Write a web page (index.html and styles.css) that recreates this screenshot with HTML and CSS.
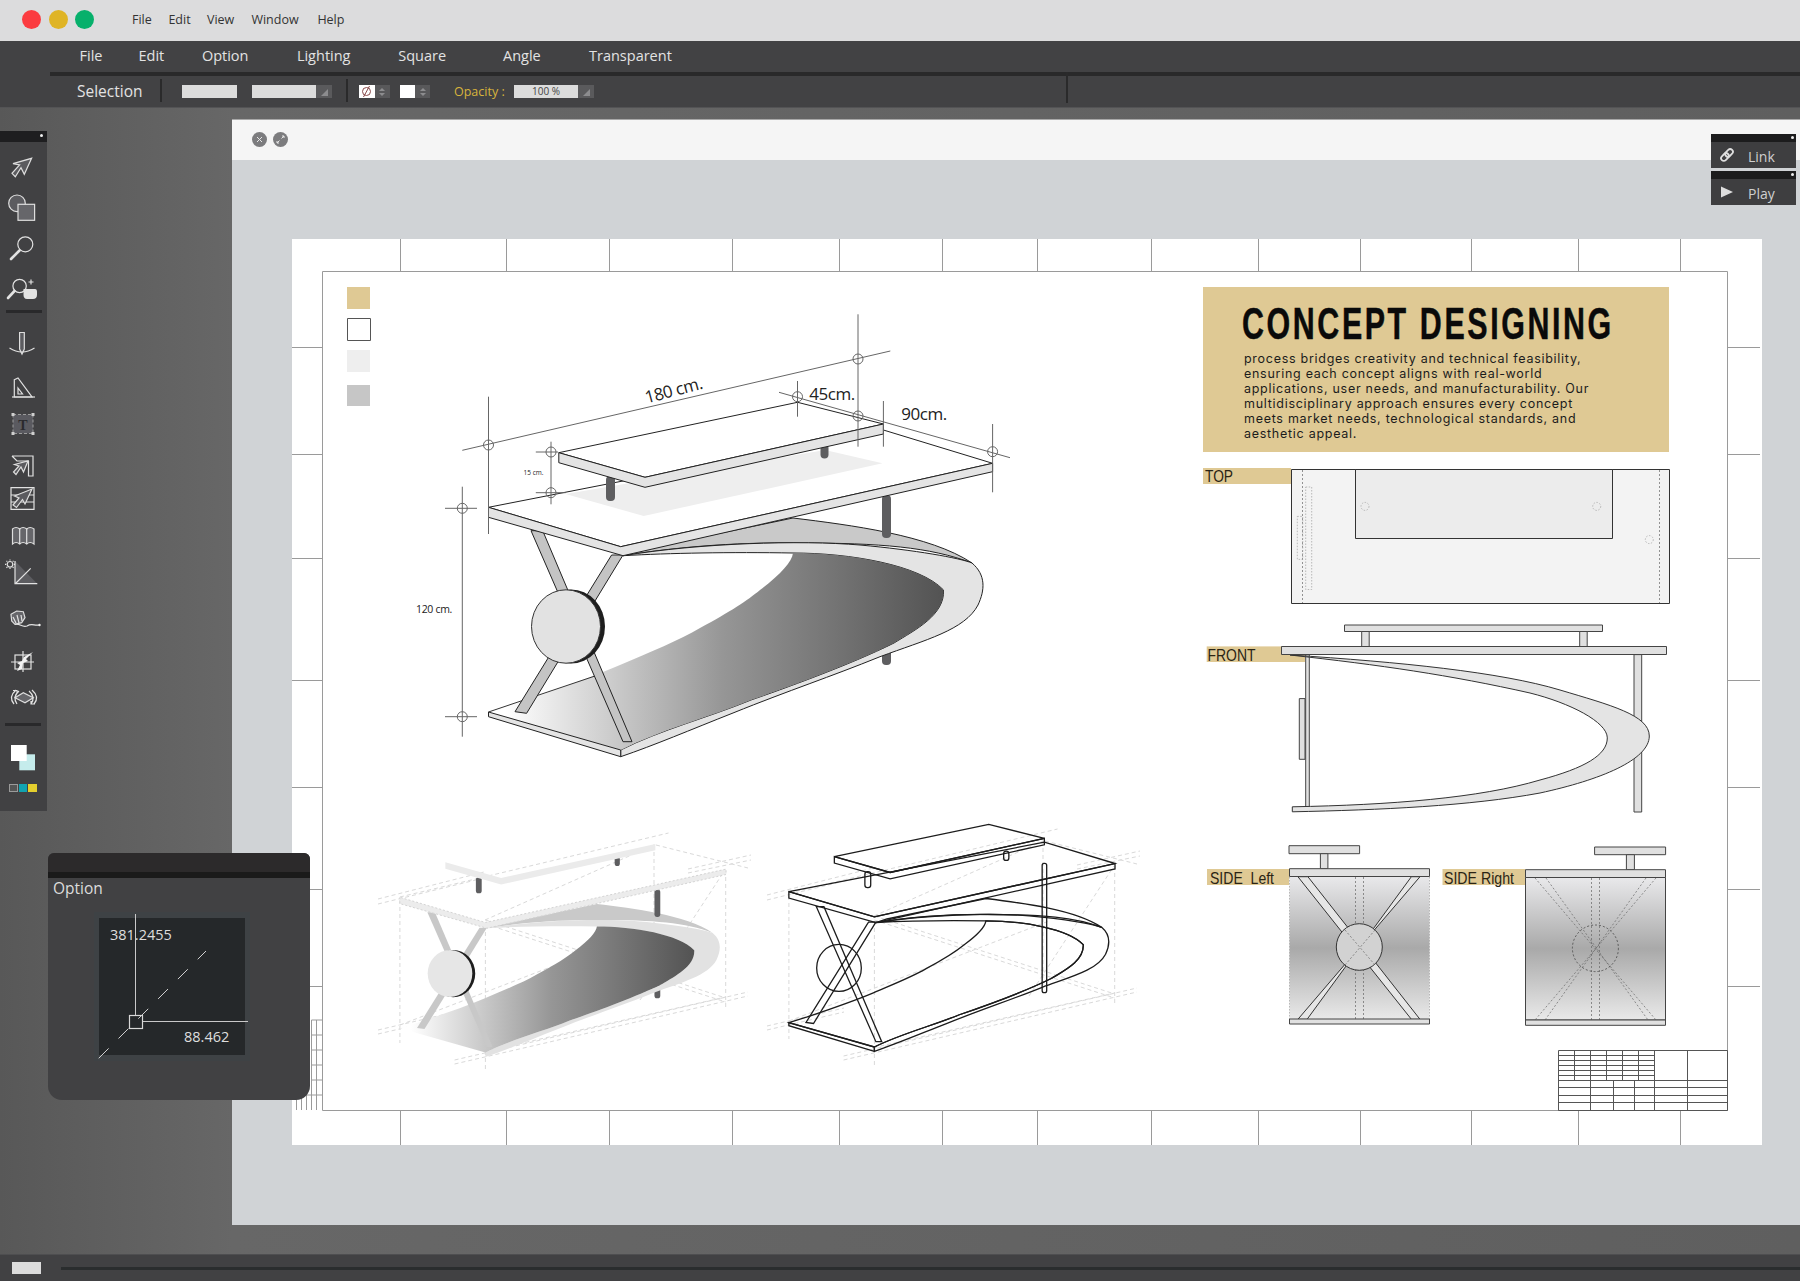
FILE: index.html
```html
<!DOCTYPE html>
<html lang="en">
<head>
<meta charset="utf-8">
<title>Concept Designing</title>
<link rel="stylesheet" href="styles.css">
</head>
<body>
<header class="titlebar">
  <div class="lights"><span class="light red"></span><span class="light amber"></span><span class="light green"></span></div>
  <nav class="sysmenu"><span class="s1">File</span><span class="s-2">Edit</span><span class="s-3">View</span><span class="s-4">Window</span><span>Help</span></nav>
</header>
<nav class="appmenu">
  <span class="m1">File</span><span class="m2">Edit</span><span class="m3">Option</span><span class="m4">Lighting</span><span class="m5">Square</span><span class="m6">Angle</span><span class="m7">Transparent</span>
</nav>
<div class="options">
  <span class="sel-label">Selection</span>
  <span class="vsep"></span>
  <span class="field f-a"></span>
  <span class="field f-b"></span><span class="drop"></span>
  <span class="vsep s2"></span>
  <span class="swatch sw-none"><svg width="15" height="13" viewBox="0 0 15 13"><circle cx="7.5" cy="6.5" r="4" class="none-mark"/><path d="M4.5 12L10.5 1" class="none-mark"/></svg></span><span class="spin"><i></i><b></b></span>
  <span class="swatch sw-white"></span><span class="spin"><i></i><b></b></span>
  <span class="opacity">Opacity :</span>
  <span class="field f-c">100 %</span><span class="drop"></span>
  <span class="vsep s3"></span>
</div>

<main class="workspace">
  <section class="doc">
    <div class="doc-head">
      <span class="doc-btn">
        <svg width="15" height="15" viewBox="0 0 15 15"><path d="M5 5l5 5M10 5l-5 5" class="doc-glyph"/></svg>
      </span>
      <span class="doc-btn">
        <svg width="15" height="15" viewBox="0 0 15 15"><path d="M8.5 6.5L11 4M6.5 8.5L4 11M9 4h2v2M4 9v2h2" class="doc-glyph"/></svg>
      </span>
    </div>
    <div class="doc-body">
      <div class="paper">
        <svg class="sheet" width="1470" height="906" viewBox="292 239 1470 906">
          <defs>
            <linearGradient id="shade" gradientUnits="userSpaceOnUse" x1="505" y1="0" x2="940" y2="0">
              <stop offset="0" stop-color="#ffffff"/><stop offset=".5" stop-color="#969696"/><stop offset="1" stop-color="#545454"/>
            </linearGradient>
            <linearGradient id="sideshade" x1="0" y1="0" x2="0" y2="1">
              <stop offset="0" stop-color="#e9e9eb"/><stop offset=".5" stop-color="#a9a9a9"/><stop offset="1" stop-color="#e9e9e9"/>
            </linearGradient>
            <path id="g-ridge" d="M640 550L793 518C850 525 930 535 972 563C930 547 880 543 800 543C730 542 670 548 623 555.7Z"/>
            <path id="g-band" d="M623 555.7C700 543 800 540 860 545C915 550 960 558 972 563C986 575 985 590 978 605C965 630 925 640 880 656.7C830 677 790 690 733 713C690 730 655 745 620.7 756.7V750C660 730 710 717 751 700C780 690 850 665 894 643C915 630 945 615 943.5 590C920 565 850 553 793 553C730 552 670 553 623 555.7Z"/>
            <path id="g-dark" d="M488.5 712L517 703C555 690 590 678 620 665C650 652 680 640 700 628C730 612 748 600 760 590C780 575 792 562 793 553C850 553 920 565 943.5 590C945 615 915 630 894 643C850 665 780 690 751 700C710 717 660 730 620.7 750Z"/>
            <path id="g-desk-top" d="M488.5 507.3L620.7 546.7L992.6 463.3L883.4 430Z"/>
            <path id="g-desk-edge" d="M488.5 507.3V517.3L623 555.7L992.6 471.7V463.3L620.7 546.7Z"/>
            <path id="g-shelf-top" d="M558.8 452.7L797.5 402.3L883.4 424L645 477.3Z"/>
            <path id="g-shelf-edge" d="M558.8 452.7V462.7L645 487.3L883.4 434V424L645 477.3Z"/>
            <path id="g-base" d="M488.5 712V716.7L620.7 756.7V750Z"/>
            <path id="g-leg-a" d="M531 530.7H542.7L632 741.7H623Z"/>
            <path id="g-leg-b" d="M611.6 555H623L526.6 713.3L515 711.7Z"/>
            <ellipse id="g-disc-back" cx="571" cy="626.5" rx="34" ry="37"/>
            <ellipse id="g-disc" cx="566" cy="626.5" rx="34.5" ry="36.7"/>
            <rect id="g-post-a" x="606" y="476" width="9" height="25" rx="4"/>
            <rect id="g-post-b" x="820.5" y="444" width="8" height="14.5" rx="4"/>
            <rect id="g-post-c" x="882" y="495" width="9" height="43" rx="4"/>
            <rect id="g-stub" x="882" y="640" width="9" height="25" rx="4"/>
            <rect id="g-post-long" x="880" y="463" width="7" height="202" rx="3"/>
            <g id="g-guides">
              <path d="M399.9 897L668.5 833M378 904L484 878M378 899L484 872M656 845L748 868M688 873L751 860M688 869L751 855M485.4 920L725.7 998M485.4 924L725.7 1002M454.6 1060L748 992M454.6 1064L748 996M378 1030L455 1012M378 1034L455 1016M484.4 1051.7L725.7 997M400 1025L660 925M485 920L654 845M640 1000L725 870"/>
              <path d="M399.9 900V1043M485.4 925V1070M725.7 870V1010M654 845V990"/>
            </g>
          </defs>

          <g class="frame">
            <rect x="322.5" y="271.5" width="1405" height="839"/>
            <path d="M400.5 239V271M506.5 239V271M609.5 239V271M732.5 239V271M839.5 239V271M942.5 239V271M1037.5 239V271M1151.5 239V271M1258.5 239V271M1360.5 239V271M1471.5 239V271M1578.5 239V271M1680.5 239V271"/>
            <path d="M400.5 1111V1145M506.5 1111V1145M609.5 1111V1145M732.5 1111V1145M839.5 1111V1145M942.5 1111V1145M1037.5 1111V1145M1151.5 1111V1145M1258.5 1111V1145M1360.5 1111V1145M1471.5 1111V1145M1578.5 1111V1145M1680.5 1111V1145"/>
            <path d="M292 347.5H322M292 454.5H322M292 558.5H322M292 680.5H322M292 787.5H322M292 889.5H322M292 986.5H322"/>
            <path d="M1728 347.5H1760M1728 454.5H1760M1728 558.5H1760M1728 680.5H1760M1728 787.5H1760M1728 889.5H1760M1728 986.5H1760"/>
            <path d="M311.5 1020H322M311.5 1035H322M311.5 1050H322M311.5 1065H322M311.5 1080H322M292 1095H322M311.5 1020V1110M316.5 1020V1110M296.5 1095V1110M301.5 1095V1110M306.5 1095V1110"/>
          </g>

          <rect class="sw-gold" x="347" y="287" width="23" height="22"/>
          <rect class="sw-open" x="347.5" y="318.5" width="23" height="22"/>
          <rect class="sw-light" x="347" y="350" width="23" height="22"/>
          <rect class="sw-grey" x="347" y="385" width="23" height="21"/>

          <!-- main isometric table -->
          <g class="shaded">
            <use href="#g-stub" class="post"/>
            <use href="#g-ridge" class="ridge"/>
            <use href="#g-band" class="band"/>
            <use href="#g-dark" class="dark"/>
            <path class="baseline" d="M488.5 712L595 676"/>
            <use href="#g-post-c" class="post"/>
            <use href="#g-base" class="band"/>
            <use href="#g-leg-a" class="leg"/>
            <use href="#g-leg-b" class="leg"/>
            <use href="#g-desk-top" class="whiteface"/>
            <use href="#g-desk-edge" class="band"/>
            <path class="shadow" d="M565.6 494L825 450L882.4 463.3L643.7 516Z"/>
            <use href="#g-post-a" class="post"/>
            <use href="#g-post-b" class="post"/>
            <use href="#g-shelf-top" class="whiteface"/>
            <use href="#g-shelf-edge" class="band"/>
            <use href="#g-disc-back" class="discback"/>
            <use href="#g-disc" class="disc"/>
          </g>

          <g class="dims">
            <path d="M462.3 450.3L890.3 351M488.5 396.7V534M858 314.3V446.7M779 392.3L1010 457.7M797.5 381V416.7M883.4 401V446.7M992.6 424V492.3M551 441.7V504.3M535.8 452H558M535.8 492.7H565.6M462.3 486.7V736.7M445 508.3H477M445 716.7H477"/>
            <circle cx="488.5" cy="445" r="5"/><circle cx="858" cy="359" r="5"/><circle cx="797.5" cy="396.7" r="5"/><circle cx="858" cy="416" r="5"/><circle cx="992.6" cy="451.7" r="5"/><circle cx="551" cy="452" r="5"/><circle cx="551" cy="492.7" r="5"/><circle cx="462.3" cy="508.3" r="5"/><circle cx="462.3" cy="716.7" r="5"/>
          </g>
          <text class="dim" x="675" y="396" transform="rotate(-15 675 396)">180 cm.</text>
          <text class="dim" x="832" y="400">45cm.</text>
          <text class="dim" x="924" y="420">90cm.</text>
          <text class="dim-s" x="434" y="613">120 cm.</text>
          <text class="dim-xs" x="533.5" y="475">15 cm.</text>

          <!-- construction lines + ghost render -->
          <use href="#g-guides" class="guides"/>
          <g class="ghost" transform="matrix(.647 0 0 .64 83.8 572.6)">
            <use href="#g-stub" class="post"/>
            <use href="#g-ridge" class="ridge"/>
            <use href="#g-band" class="g-band"/>
            <use href="#g-dark" class="dark"/>
            <use href="#g-post-c" class="post"/>
            <use href="#g-leg-a" class="g-leg"/>
            <use href="#g-leg-b" class="g-leg"/>
            <use href="#g-desk-edge" class="g-edge"/>
            <use href="#g-post-a" class="post"/>
            <use href="#g-post-b" class="post"/>
            <use href="#g-shelf-edge" class="g-shelf"/>
            <use href="#g-disc-back" class="discback"/>
            <use href="#g-disc" class="g-disc"/>
          </g>

          <!-- wireframe -->
          <use href="#g-guides" class="guides" transform="translate(389 -4)"/>
          <g class="wire" transform="matrix(.647 0 0 .64 472.8 567)">
            <use href="#g-ridge"/>
            <use href="#g-band"/>
            <use href="#g-dark"/>
            <use href="#g-post-long"/>
            <use href="#g-leg-a"/>
            <use href="#g-leg-b"/>
            <use href="#g-base"/>
            <use href="#g-desk-top"/>
            <use href="#g-desk-edge"/>
            <use href="#g-post-a"/>
            <use href="#g-post-b"/>
            <use href="#g-shelf-top"/>
            <use href="#g-shelf-edge"/>
            <use href="#g-disc"/>
          </g>

          <!-- TOP -->
          <rect class="tag" x="1203" y="468" width="88" height="16"/>
          <text class="tagtext" x="1205" y="482" textLength="28" lengthAdjust="spacingAndGlyphs">TOP</text>
          <rect class="top-desk" x="1291.5" y="469.5" width="378" height="134"/>
          <rect class="top-shelf" x="1355.5" y="469.5" width="257" height="69"/>
          <path class="dash" d="M1302.5 470V603M1659.5 470V603"/>
          <rect class="dot" x="1305.7" y="487" width="6" height="102.5"/>
          <rect class="dot" x="1297.3" y="516.4" width="5.4" height="43"/>
          <circle class="dot" cx="1365" cy="506.4" r="4"/><circle class="dot" cx="1596.7" cy="506.4" r="4"/><circle class="dot" cx="1649.3" cy="539.6" r="4"/>

          <!-- FRONT -->
          <rect class="tag" x="1206.7" y="646.4" width="98.3" height="15.6"/>
          <text class="tagtext" x="1207.5" y="660.5" textLength="48" lengthAdjust="spacingAndGlyphs">FRONT</text>
          <rect class="part" x="1344.5" y="625" width="258" height="6.5"/>
          <rect class="part" x="1361.7" y="631.5" width="7.5" height="15"/>
          <rect class="part" x="1579.7" y="631.5" width="7.5" height="15"/>
          <rect class="part" x="1305.7" y="654.6" width="3.6" height="152.4"/>
          <rect class="part" x="1634" y="654.6" width="7.7" height="157.4"/>
          <rect class="part" x="1299.3" y="698.6" width="5.7" height="60.7"/>
          <path class="sweep" d="M1290 655C1400 662 1500 672 1560 690C1610 705 1649.3 715 1649.3 736C1649.3 760 1600 780 1540 793C1470 806 1380 810 1292.3 811.8V806.8C1390 805 1480 798 1540 780C1585 768 1607.3 755 1607.3 737.9C1607.3 722 1570 703 1530 693C1450 675 1380 665 1290 655Z"/>
          <rect class="part" x="1281.5" y="646.5" width="385" height="8"/>

          <!-- SIDE Left -->
          <rect class="tag" x="1207" y="869" width="82" height="16"/>
          <text class="tagtext" x="1210" y="883.5" textLength="64" lengthAdjust="spacingAndGlyphs">SIDE  Left</text>
          <rect class="sideface" x="1289.5" y="876.5" width="140" height="143"/>
          <path class="dot" d="M1289.5 877V1019M1429.5 877V1019"/>
          <path class="dash" d="M1355.5 877V1019M1363.5 877V1019"/>
          <path class="limb" d="M1297.9 876.7H1307.9L1420 1019.3H1411.4Z"/>
          <path class="limb" d="M1420 876.7H1411.4L1307.1 1019.3H1297.9Z"/>
          <ellipse class="hub" cx="1359.3" cy="947" rx="23" ry="23.3"/>
          <path class="dash" d="M1345 930L1375 965M1375 930L1345 965"/>
          <rect class="part" x="1289" y="845.7" width="70.6" height="8"/>
          <rect class="part" x="1320.4" y="853.7" width="7.5" height="15"/>
          <rect class="part" x="1289.5" y="868.7" width="140" height="7.8"/>
          <rect class="part" x="1289.5" y="1019" width="140" height="5"/>

          <!-- SIDE Right -->
          <rect class="tag" x="1442.5" y="869" width="83" height="16"/>
          <text class="tagtext" x="1444" y="883.5" textLength="70" lengthAdjust="spacingAndGlyphs">SIDE Right</text>
          <rect class="sideface solid" x="1525.5" y="877.5" width="140" height="142.5"/>
          <path class="dash" d="M1591.5 878V1020M1599.5 878V1020M1535 878L1656 1020M1546 878L1648 1020M1656 878L1535 1020M1646 878L1545 1020"/>
          <ellipse class="dashring" cx="1595.4" cy="948.3" rx="23" ry="23.3"/>
          <rect class="part" x="1594.6" y="847" width="71" height="7.7"/>
          <rect class="part" x="1626.4" y="854.7" width="8" height="15"/>
          <rect class="part" x="1525.5" y="869.7" width="140" height="7.8"/>
          <rect class="part" x="1525.5" y="1020" width="140" height="5.3"/>

          <!-- title block -->
          <g class="tblock">
            <rect x="1558.5" y="1050.5" width="169" height="60"/>
            <path d="M1558.5 1055.5H1654M1558.5 1060.5H1654M1558.5 1065.5H1654M1558.5 1070.5H1654M1558.5 1075.5H1654M1558.5 1080.5H1727.5M1558.5 1087.5H1727.5M1558.5 1095.5H1727.5M1558.5 1102.5H1727.5"/>
            <path d="M1574.5 1050V1080M1590.5 1050V1110M1606.5 1050V1080M1622.5 1050V1080M1638.5 1050V1080M1613.5 1080V1110M1634.5 1080V1110M1654.5 1050V1110M1687.5 1050V1110"/>
          </g>
        </svg>
        <article class="brief">
          <h1>CONCEPT DESIGNING</h1>
          <p>process bridges creativity and technical feasibility,<br>ensuring each concept aligns with real-world<br>applications, user needs, and manufacturability. Our<br>multidisciplinary approach ensures every concept<br>meets market needs, technological standards, and<br>aesthetic appeal.</p>
        </article>
      </div>
    </div>
  </section>

  <aside class="palette">
    <div class="grip"></div>
    <div class="tools">
      <svg class="tool" viewBox="0 0 28 28"><path class="ic" d="M23.6 4.3L16.3 20.3L13 13.7L7.3 22.7L4 19.3L11.6 11L5 9.7Z"/></svg>
      <svg class="tool" viewBox="0 0 28 28"><circle class="ic" cx="9" cy="9.3" r="8.3"/><rect class="ic solid" x="10" y="10.3" width="16.6" height="16"/></svg>
      <svg class="tool" viewBox="0 0 28 28"><circle class="ic-w" cx="17.3" cy="10.3" r="7.5"/><path class="ic-h" d="M11.5 16.5L3 25"/></svg>
      <svg class="tool" viewBox="0 2 28 28"><circle class="ic-w" cx="11.6" cy="13" r="6.7"/><path class="ic-h" d="M6.5 18L0 25"/><path class="ic-w" d="M23 6.5V11.5M20.5 9H25.5"/><path class="ic-f" d="M15.5 16H27C28.5 16 29 17 29 19V22C29 24.5 27.5 26 25 26H19C16.5 26 15.5 24 15.5 22Z"/></svg>
      <span class="rule"></span>
      <svg class="tool" viewBox="0 0 28 28"><path class="ic" d="M11.6 2.5H16.3V19L14 24L11.6 19Z"/><path class="ic-w" d="M1.5 18Q14 26 26.5 18"/></svg>
      <svg class="tool" viewBox="0 0 28 28"><path class="ic-w" d="M6.3 7.7L10 6L24 25H6.3ZM10 16L14.5 22H10Z"/><path class="ic-w" d="M4 25H27"/></svg>
      <svg class="tool" viewBox="0 0 28 28"><rect class="tbox" x="5" y="4.5" width="20" height="19"/><path class="tcorner" d="M3.5 3H6.5V6H3.5ZM23.5 3H26.5V6H23.5ZM3.5 22H6.5V25H3.5ZM23.5 22H26.5V25H23.5Z"/><text class="tglyph" x="15" y="20">T</text></svg>
      <svg class="tool" viewBox="0 0 28 28"><path class="ic-w" d="M4 4H25V24H20.5V9M4 4L9 9H20.5"/><path class="ic" d="M20 9L15.5 20L13 15L8 22.5L5.5 20L11 14L6.5 12.5Z"/></svg>
      <svg class="tool" viewBox="0 0 28 28"><path class="ic-w" d="M3 3.7H26V25.3H3ZM3 11H26M3 18H26"/><path class="ic" d="M24 5L17 20L14.5 15.5L8.5 23.5L5 21L11 14L6.5 12Z"/></svg>
      <svg class="tool" viewBox="0 0 28 28"><path class="ic solid" d="M4.5 8Q8 5 11.7 8Q15 5 18.7 8Q22 5 26 8V23Q22 20 18.7 23Q15 20 11.7 23Q8 20 4.5 23Z"/><path class="ic-w" d="M11.7 8V23M18.7 8V23"/></svg>
      <svg class="tool" viewBox="0 0 28 28"><path class="tri" d="M7 2L29.3 24.7H7Z"/><path class="ic-w" d="M7 2V24.7H29.3M8 24L22.7 9.3"/><circle class="ic-w" cx="2" cy="5.3" r="2.8"/><path class="ic-w" d="M2 .5V1.6M2 9V10M-3 5.3H-1.8M5.8 5.3H7M-1.5 1.8L-.7 2.6M5.5 1.8L4.7 2.6M-1.5 8.8L-.7 8M5.5 8.8L4.7 8"/></svg>
      <svg class="tool" viewBox="0 0 28 28"><path class="ic solid" d="M3 9.3L8.7 6L15.3 6.7L17 12.7L13.7 17.7L7 19.3L3.7 16Z"/><path class="ic-w" d="M5 12L8 18M9 10L11 18M13 10L14 16M7 19.3C12 18 14 23 19 21C24 18 26 21 31 20"/><circle class="ic-d" cx="31.5" cy="20" r="1.2"/></svg>
      <svg class="tool" viewBox="0 0 28 28"><rect class="ic-w" x="7" y="8" width="16" height="14"/><path class="ic-w" d="M3 15H26M15 4V25"/><path class="ic-d" d="M25 5L18 12L20 14L15 16L14 22L9 24L12 18L9 16L14 14L16 10Z"/></svg>
      <svg class="tool" viewBox="0 0 28 28"><path class="ic solid" d="M7 13.7L15.3 8.7L25.3 13.7L17 18.7Z"/><path class="ic-w" d="M8 6Q0 13 6 20M11 7Q4 13 9 20M24 6Q32 13 26 20M21 7Q28 13 23 20M5 6.5H9V10M27 20H23V17"/></svg>
      <span class="rule r2"></span>
      <svg class="tool fill" viewBox="0 0 28 40"><rect class="fill-b" x="11.3" y="16.3" width="15.7" height="16"/><rect class="fill-a" x="3" y="7" width="15.7" height="16"/></svg>
      <div class="chips"><span class="chip c1"></span><span class="chip c2"></span><span class="chip c3"></span></div>
    </div>
  </aside>

  <aside class="option-panel">
    <div class="panel-top"></div>
    <div class="panel-strip"></div>
    <div class="panel-title">Option</div>
    <div class="coord-well">
      <div class="coord-box">
        <svg class="coord-lines" width="156" height="149" viewBox="94 912 156 149">
          <path class="coord-dash" d="M98.7 1058.3L206 951"/>
          <path class="coord-line" d="M135.5 914V1015M143 1021.5H248"/>
          <rect class="coord-handle" x="129.5" y="1015.5" width="13" height="13"/>
        </svg>
        <span class="coord-a">381.2455</span>
        <span class="coord-b">88.462</span>
      </div>
    </div>
  </aside>

  <aside class="mini-stack">
    <div class="mini">
      <div class="mini-grip"></div>
      <div class="mini-row">
        <svg class="mini-ic" width="16" height="16" viewBox="0 0 16 16"><g transform="rotate(-45 8 8)"><rect class="chain" x="0.8" y="5.3" width="8.6" height="5.4" rx="2.7"/><rect class="chain" x="6.6" y="5.3" width="8.6" height="5.4" rx="2.7"/></g></svg>
        <span>Link</span>
      </div>
    </div>
    <div class="mini">
      <div class="mini-grip"></div>
      <div class="mini-row">
        <svg class="mini-ic" width="16" height="16" viewBox="0 0 16 16"><path class="play" d="M2 2.5L14 8L2 13.5Z"/></svg>
        <span>Play</span>
      </div>
    </div>
  </aside>
</main>

<footer class="statusbar">
  <span class="st-box"></span>
  <span class="st-line"></span>
</footer>
</body>
</html>
```
FILE: styles.css
```css
* { box-sizing: border-box; }
html, body { margin: 0; height: 100%; }
body {
  width: 1800px; height: 1281px; overflow: hidden;
  display: flex; flex-direction: column;
  font-family: "Open Sans", "Noto Sans", sans-serif;
  background: #5f5f5f;
}

/* title bar */
.titlebar {
  height: 41px; flex: none; background: #dcdcdd;
  display: flex; align-items: center; padding-left: 22px;
}
.lights { display: flex; gap: 7.5px; }
.light { width: 19px; height: 19px; border-radius: 50%; margin-top: -3px; }
.red { background: #fb3b40; }
.amber { background: #dfb425; }
.green { background: #07b06b; }
.sysmenu { display: flex; margin-left: 38px; margin-top: -3px; font-size: 12.5px; color: #333; }
.s1 { width: 36.4px; }
.s-2 { width: 38.6px; }
.s-3 { width: 44.4px; }
.s-4 { width: 66px; }

/* menu bar */
.appmenu {
  height: 31px; flex: none; background: #424244; padding: 0 0 2px 79.5px;
  display: flex; align-items: center; color: #e3e3e3; font-size: 14.5px;
}
.appmenu span { flex: none; }
.m1 { width: 59px; }
.m2 { width: 63.4px; }
.m3 { width: 95px; }
.m4 { width: 101.3px; }
.m5 { width: 104.8px; }
.m6 { width: 86px; }

/* option bar */
.options {
  height: 35px; flex: none; margin-left: 0; background: #424244;
  display: flex; align-items: center; position: relative; padding-left: 77px;
  border-top: 0; color: #e3e3e3;
}
.options::before {
  content: ""; position: absolute; left: 50px; right: 0; top: 0; height: 4px; background: #29292a;
}
.sel-label { font-size: 15.5px; width: 83px; padding-top: 2px; }
.vsep { width: 2px; height: 23px; background: #2a2a2b; margin-top: 2px; }
.field {
  height: 13px; background: #dcdcdc; margin-top: 4px;
  color: #444; font-size: 10px; line-height: 13px; text-align: center;
}
.f-a { width: 55px; margin-left: 20px; }
.f-b { width: 64px; margin-left: 15px; }
.f-c { width: 64px; }
.drop {
  width: 16px; height: 13px; background: #5a5a5c; margin-top: 4px; position: relative;
}
.drop::after {
  content: ""; position: absolute; right: 4px; bottom: 2px;
  border-style: solid; border-width: 0 0 7px 7px; border-color: transparent transparent #8c8c8e transparent;
}
.s2 { margin-left: 14px; }
.swatch { width: 15.5px; height: 13px; background: #fff; margin-top: 4px; display: block; }
.sw-none { margin-left: 11px; }
.sw-none svg { display: block; }
.none-mark { fill: none; stroke: #8a4a4a; stroke-width: 1; }
.sw-white { margin-left: 10px; }
.spin {
  width: 15px; height: 13px; margin-top: 4px; background: #58585a;
  display: flex; flex-direction: column; align-items: center; justify-content: center; gap: 2px;
}
.spin i, .spin b { display: block; width: 0; height: 0; border-style: solid; border-color: transparent; }
.spin i { border-width: 0 3px 3px; border-bottom-color: #8d8d8f; }
.spin b { border-width: 3px 3px 0; border-top-color: #8d8d8f; }
.opacity { color: #d8b43c; font-size: 12.5px; margin-left: 24px; width: 60px; padding-top: 3px; }
.s3 { position: absolute; left: 1066px; height: 31px; top: 0; margin: 0; }

/* workspace */
.workspace {
  flex: 1; position: relative; display: flex; flex-direction: column; min-height: 0;
  background: linear-gradient(90deg, #585858 0, #676767 232px, #5f5f5f 100%);
  padding: 11px 0 29px 232px;
  border-top: 1px solid #535355;
}

/* document window */
.doc { flex: 1; display: flex; flex-direction: column; min-height: 0; background: #d0d3d6; }
.doc-head {
  height: 41px; flex: none; background: #f5f5f5; border-top: 1px solid #a8a8a8;
  display: flex; align-items: center; gap: 6.4px; padding: 0 0 2px 19.5px;
}
.doc-btn { width: 15px; height: 15px; border-radius: 50%; background: #7c7c7e; display: block; }
.doc-btn svg { display: block; }
.doc-glyph { fill: none; stroke: #e8e8e8; stroke-width: 1; }
.doc-body { flex: 1; padding: 79px 0 0 60px; }

/* sheet */
.paper { position: relative; width: 1470px; height: 906px; background: #fff; }
.sheet { position: absolute; left: 0; top: 0; display: block; }
.sheet path, .sheet rect, .sheet circle, .sheet ellipse { vector-effect: non-scaling-stroke; }

.frame { fill: none; stroke: #9a9a9a; stroke-width: 1; }
.sw-gold { fill: #dfc994; }
.sw-open { fill: #fff; stroke: #555; stroke-width: 1; }
.sw-light { fill: #eeeeee; }
.sw-grey { fill: #c6c6c6; }

.shaded { stroke: #222; stroke-width: 1; }
.ridge { fill: #c9c9c9; }
.band { fill: #e4e4e4; }
.dark { fill: url(#shade); stroke: none; }
.baseline { fill: none; stroke: #333; stroke-width: 1; }
.post { fill: #5e5e60; stroke: none; }
.leg { fill: #c4c4c4; }
.whiteface { fill: #fff; }
.shadow { fill: #eeeeee; stroke: none; }
.disc { fill: #e2e2e2; stroke: #333; }
.discback { fill: #1e1e1e; stroke: none; }
.dims { fill: none; stroke: #666; stroke-width: 1; }
.dim { font: 17px "Open Sans", sans-serif; fill: #222; text-anchor: middle; letter-spacing: -.5px; }
.dim-s { font: 10.5px "Open Sans", sans-serif; fill: #222; text-anchor: middle; letter-spacing: -.3px; }
.dim-xs { font: 6.5px "Open Sans", sans-serif; fill: #222; text-anchor: middle; }

.guides { fill: none; stroke: #d9d9d9; stroke-width: 1; stroke-dasharray: 4 3; }
.ghost { stroke: none; }
.g-band { fill: #e2e2e2; }
.g-leg { fill: #c8c8c8; }
.g-edge { fill: #ececec; stroke: #d4d4d4; stroke-dasharray: 2 2; }
.g-shelf { fill: #ebebeb; }
.g-disc { fill: #e6e6e6; }
.wire { fill: none; stroke: #1c1c1c; stroke-width: 1.3; }

.tag { fill: #dfc994; }
.tagtext { font: 16.5px "Liberation Sans", sans-serif; fill: #2a2414; white-space: pre; }
.top-desk { fill: #f3f3f3; stroke: #333; stroke-width: 1; }
.top-shelf { fill: #ececec; stroke: #333; stroke-width: 1; }
.dash { fill: none; stroke: #666; stroke-width: .7; stroke-dasharray: 2 2; }
.dot { fill: none; stroke: #aaa; stroke-width: .8; stroke-dasharray: 1.5 1.5; }
.part { fill: #e0e0e0; stroke: #444; stroke-width: 1; }
.sweep { fill: #e4e4e4; stroke: #333; stroke-width: 1; }
.sideface { fill: url(#sideshade); stroke: none; }
.sideface.solid { stroke: #444; stroke-width: 1; }
.limb { fill: #e6e6e6; stroke: #333; stroke-width: 1; }
.hub { fill: #d2d2d2; stroke: #333; stroke-width: 1; }
.dashring { fill: none; stroke: #444; stroke-width: .8; stroke-dasharray: 2 2; }
.tblock { fill: none; stroke: #555; stroke-width: 1; }

/* brief */
.brief {
  position: absolute; left: 911px; top: 48px; width: 466px; height: 165px;
  background: #dfc994; padding: 14px 0 0 39px; color: #111;
}
.brief h1 {
  margin: 0; font: 700 44px/46px "Liberation Sans", sans-serif;
  letter-spacing: 3.8px; color: #0a0a0a; white-space: nowrap;
  transform: scaleX(.69); transform-origin: left center;
  -webkit-text-stroke: .5px #0a0a0a;
}
.brief p {
  margin: 4px 0 0 2px; font-family: "Inter", "Open Sans", sans-serif;
  font-size: 12.5px; line-height: 15.1px; letter-spacing: .72px; color: #1c1c1c;
  white-space: nowrap;
}

/* tool palette */
.palette { position: absolute; left: 0; top: 23px; width: 47px; height: 680px; background: #414143; }
.grip { height: 11px; background: #1e1e20; position: relative; }
.grip::after {
  content: ""; position: absolute; right: 4px; top: 3px; width: 3px; height: 3px; border-radius: 50%; background: #eee;
}
.tools {
  display: grid; padding-top: 12px;
  grid-template-rows: 40px 40px 41px 35px 20px 42px 38px 42px 32px 37px 38px 46px 42px 37px 39px 15px 46px auto;
}
.tool { width: 28px; height: 28px; margin-left: 8px; overflow: visible; display: block; }
.tool.fill { height: 40px; }
.rule { display: block; height: 3px; width: 36px; margin-left: 6px; background: #29292b; }
.r2 { margin-left: 5px; }
.ic { fill: #5b5b5f; stroke: #dedede; stroke-width: 1.2; }
.ic.solid { fill: #66666a; }
.ic-w { fill: none; stroke: #e2e2e2; stroke-width: 1.2; }
.ic-h { fill: none; stroke: #e2e2e2; stroke-width: 2.6; stroke-linecap: round; }
.ic-f { fill: #e2e2e2; stroke: none; }
.ic-d { fill: #f2f2f2; stroke: none; }
.tbox { fill: #5a5a60; stroke: #9c9c9c; stroke-width: 1; stroke-dasharray: 3 2; }
.tcorner { fill: #cfcfcf; stroke: none; }
.tglyph { font: 700 14px "Liberation Serif", serif; fill: #2a2a2e; text-anchor: middle; }
.tri { fill: #5c5c60; stroke: none; }
.fill-a { fill: #fff; }
.fill-b { fill: #c5ecec; }
.chips { display: flex; gap: 1px; margin-left: 9px; }
.chip { display: block; width: 8.7px; height: 8px; }
.c1 { background: #555; outline: 1px solid #9a9a9a; outline-offset: -1px; }
.c2 { background: #12a3b0; }
.c3 { background: #e4cf2e; }

/* Option panel */
.option-panel {
  position: absolute; left: 48px; top: 745px; width: 262px; height: 247px;
  background: #414143; border-radius: 6px 6px 14px 14px; overflow: hidden;
}
.panel-top { height: 19px; background: #2c2a2b; }
.panel-strip { height: 6px; background: #1a1a1a; }
.panel-title { padding: 0 0 0 5px; color: #dcdcdc; font-size: 15.5px; line-height: 21px; }
.coord-well {
  width: 156px; height: 149px; margin: 13px 0 0 46px; padding: 6px 5px; background: #3e4245;
}
.coord-box { height: 137px; background: #25282a; position: relative; }
.coord-lines { position: absolute; left: -5px; top: -6px; display: block; overflow: visible; }
.coord-line { fill: none; stroke: #c9c9c9; stroke-width: 1; }
.coord-dash { fill: none; stroke: #d2d2d2; stroke-width: 1; stroke-dasharray: 14 14; }
.coord-handle { fill: none; stroke: #d8d8d8; stroke-width: 1.2; }
.coord-a, .coord-b { position: absolute; color: #dedede; font-size: 14.5px; line-height: 18px; }
.coord-a { left: 11px; top: 8px; }
.coord-b { left: 85px; top: 110px; }

/* Link / Play */
.mini-stack { position: absolute; right: 4px; top: 26px; width: 85px; display: flex; flex-direction: column; gap: 3px; }
.mini { height: 34px; background: #3e3e40; }
.mini-grip { height: 8px; background: #1c1c1d; position: relative; }
.mini-grip::after {
  content: ""; position: absolute; right: 2px; top: 2px; width: 3px; height: 3px; border-radius: 50%; background: #eee;
}
.mini-row {
  height: 26px; display: flex; align-items: center; padding-left: 8px; gap: 13px;
  color: #cfcfcf; font-size: 14px; padding-top: 4px;
}
.mini-row span { display: block; margin-top: -1px; }
.mini-ic { display: block; margin-top: -4px; }
.chain { fill: none; stroke: #dedede; stroke-width: 1.8; }
.play { fill: #dedede; }

/* status bar */
.statusbar {
  height: 27px; flex: none; background: #414143; border-top: 1px solid #4e4e50;
  display: flex; align-items: center; padding-left: 12px;
}
.st-box { width: 29px; height: 12px; background: #dcdcdc; display: block; margin-top: -1px; }
.st-line { flex: 1; height: 3px; margin-left: 20px; background: #2a2d2e; }
```
